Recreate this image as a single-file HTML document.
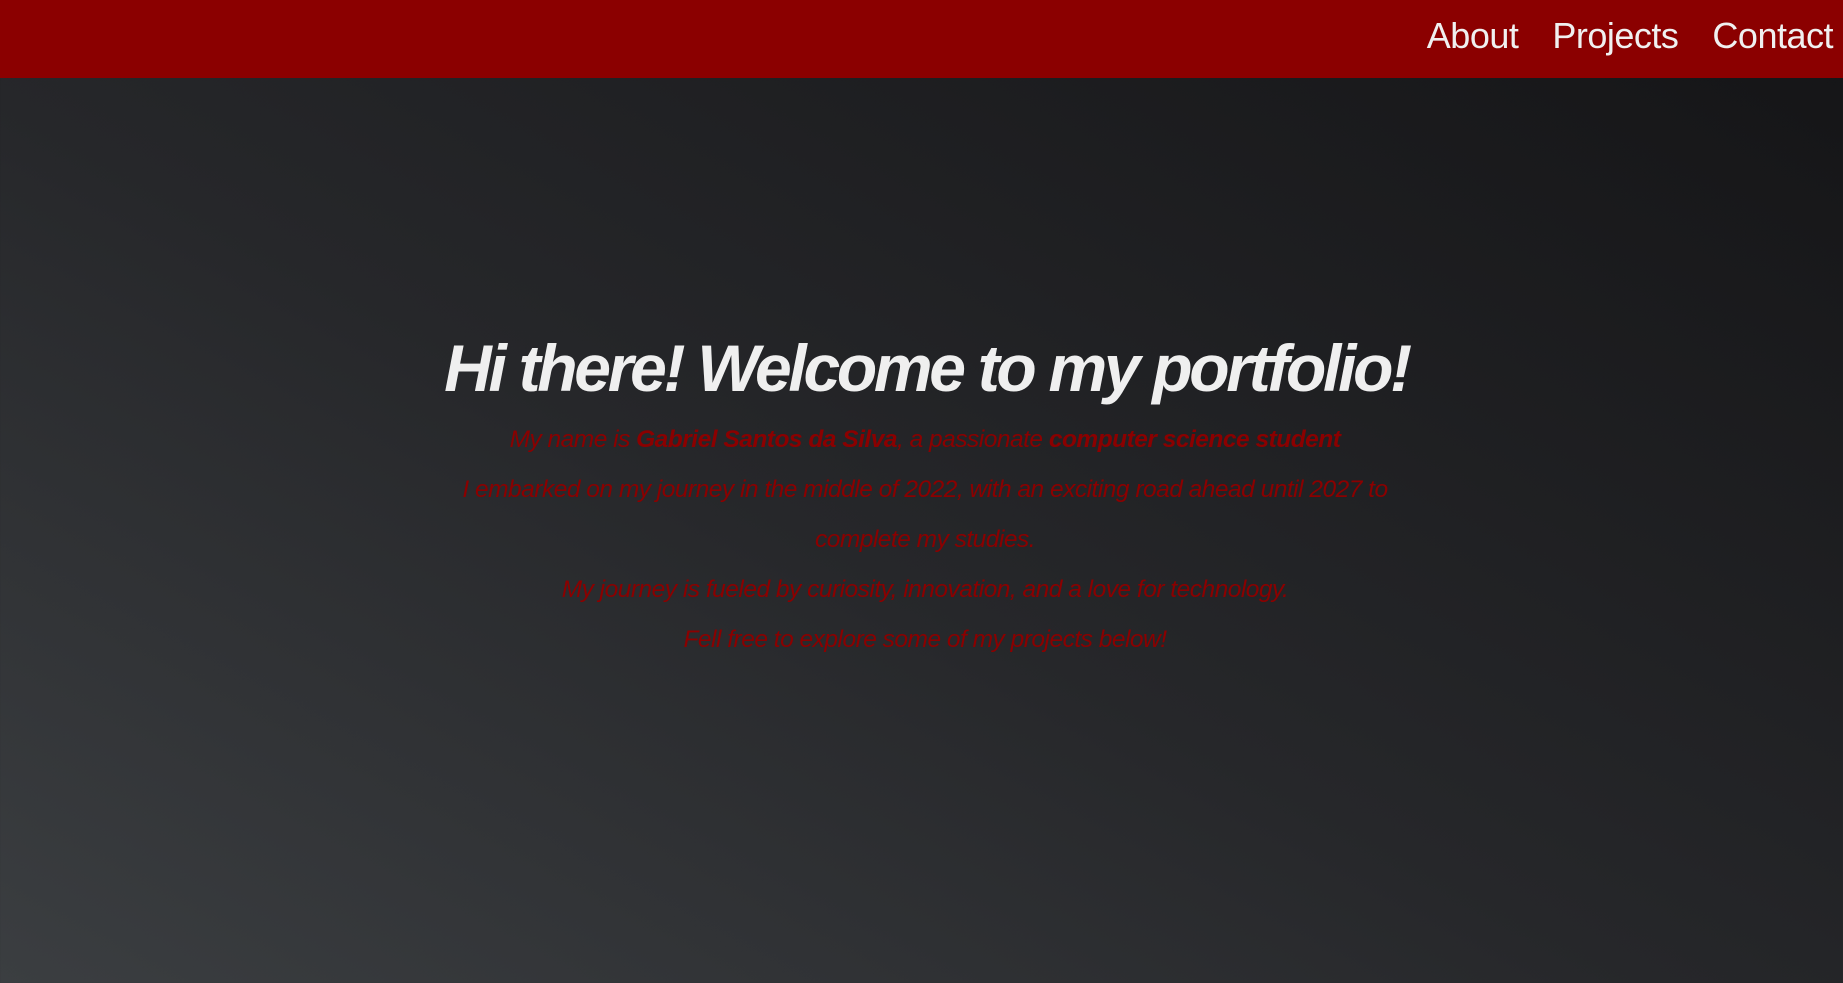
<!DOCTYPE html>
<html><head><meta charset="utf-8"><style>
html,body{margin:0;padding:0;width:1843px;height:983px;overflow:hidden}
body{background:linear-gradient(to top right,#3b3e41 0%,#26272a 45%,#141416 100%);font-family:"Liberation Sans",sans-serif}
header{height:78px;background:#8b0000;position:relative}
nav{position:absolute;right:10px;top:15px;display:flex;gap:34px}
nav a{color:#f0f0f0;font-size:36px;text-decoration:none;letter-spacing:-0.5px}
h1{position:absolute;top:330px;left:0;width:1853px;margin:0;text-align:center;color:#efefef;font-size:66px;font-style:italic;font-weight:bold;letter-spacing:-3.3px}
.p{position:absolute;top:415px;left:0;width:1850px;text-align:center;color:#8b0000;font-style:italic;font-size:24.5px;line-height:50px;letter-spacing:-0.5px}
</style></head><body>
<header><nav><a>About</a><a>Projects</a><a>Contact</a></nav></header>
<h1>Hi there! Welcome to my portfolio!</h1>
<div class="p">My name is <b>Gabriel Santos da Silva</b>, a passionate <b>computer science student</b><br>I embarked on my journey in the middle of 2022, with an exciting road ahead until 2027 to<br>complete my studies.<br>My journey is fueled by curiosity, innovation, and a love for technology.<br>Fell free to explore some of my projects below!</div>
</body></html>
